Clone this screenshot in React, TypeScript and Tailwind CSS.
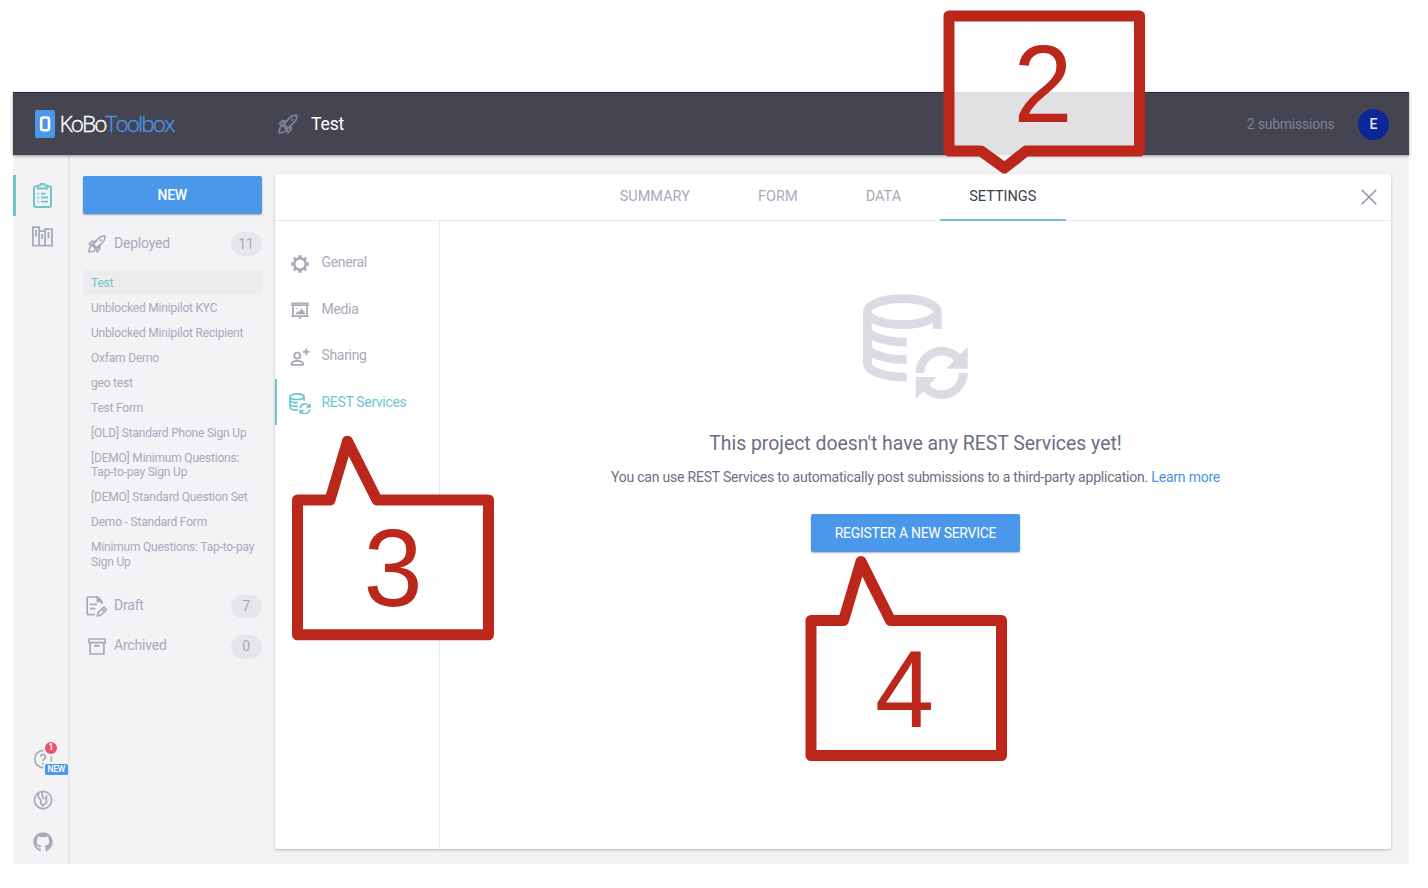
import React from "react";
import { FaGithub } from "react-icons/fa";

type IconProps = { className?: string };

function RocketIcon({ className }: IconProps) {
  return (
    <svg viewBox="0 0 24 24" fill="none" stroke="currentColor" strokeWidth="2.2" strokeLinejoin="round" strokeLinecap="round" className={className}>
      <path d="M22.600 1.400c-3.600-.2-6 .6-8.200 2.800L5.600 13.600l4.800 4.800 9.400-8.800c2.200-2.200 3-4.600 2.800-8.200z" />
      <path d="M10.500 8.400H5.200L1.500 12l13.300 5.500M15.600 13.500v5.300L12 22.500 6.500 9.200" />
      <path d="M5.600 13.600c-3 1-4.200 4-4.300 9.100 5.100-.1 8.100-1.300 9.100-4.300" />
      <path d="m16.500 7.500 1-1" />
    </svg>
  );
}

function ClipboardIcon() {
  return (
    <svg viewBox="0 0 19 25" fill="none" stroke="currentColor" strokeWidth="1.8" className="h-[25px] w-[19px]">
      <path d="M5 3.400H2.400A1.400 1.400 0 0 0 1 4.800v17.800A1.400 1.400 0 0 0 2.400 24h14.200a1.400 1.400 0 0 0 1.400-1.400V4.800a1.400 1.400 0 0 0-1.400-1.400H14" strokeWidth="2" />
      <path d="M5 5.500V2.400h2.400L8 1h3l.6 1.400H14v3.100z" />
      <path d="M4.500 10.700h1.700M8 10.700h4.500M4.500 14.500h1.700M8 14.500h7M4.500 18.600h1.700M8 18.600h7" strokeWidth="1.800" />
    </svg>
  );
}

function LibraryIcon() {
  return (
    <svg viewBox="0 0 21 21" fill="none" stroke="currentColor" strokeWidth="1.800" className="h-[21px] w-[21px]">
      <path d="M.9 1.200h6.200v18.500H.9zM7.100 5.200h6v14.500h-6zM13.100 3.200h6.900v16.500h-6.900z" />
      <path d="M4 4v6.500M10.100 8v5M16.500 6v6.500" strokeWidth="1.800" />
    </svg>
  );
}

function DraftIcon() {
  return (
    <svg viewBox="0 0 22 21" fill="none" stroke="currentColor" strokeWidth="1.700" strokeLinejoin="round" className="h-[21px] w-[22px]">
      <path d="M9 18.700H2.300A1.100 1.100 0 0 1 1.200 17.600V2.100A1.100 1.100 0 0 1 2.300 1h9.200l4.300 4.400V8" />
      <path d="M11.400 1v4.500h4.400z" fill="currentColor" />
      <path d="M4 8.400h7M4 12.700h5.500" />
      <path d="m11.300 20 .8-3.300 5.700-5.600 2.600 2.500-5.700 5.600zM16 13l2.500 2.500" />
    </svg>
  );
}

function ArchiveIcon() {
  return (
    <svg viewBox="0 0 18 17" fill="none" stroke="currentColor" strokeWidth="1.700" strokeLinejoin="round" className="h-[17px] w-[18px]">
      <path d="M.9 1h16.200v3.700H.9zM2.100 4.700h13.800V16H2.100z" />
      <path d="M6.300 7.800h5.300" strokeWidth="2.200" />
    </svg>
  );
}

function GearIcon() {
  return (
    <svg viewBox="0 0 18 18" fill="none" stroke="currentColor" className="h-[18px] w-[18px]">
      <circle cx="9" cy="9" r="5.700" strokeWidth="2.400" />
      <g strokeWidth="3.400">
        <path d="M9 .2v2.600M9 15.200v2.600M.2 9h2.600M15.200 9h2.600" />
        <path d="m2.900 2.900 1.600 1.600M13.500 13.500l1.600 1.600M2.900 15.100l1.600-1.600M13.500 4.500l1.600-1.600" strokeWidth="3" />
      </g>
    </svg>
  );
}

function MediaIcon() {
  return (
    <svg viewBox="0 0 18 17" fill="none" stroke="currentColor" className="h-[17px] w-[18px]">
      <path d="M.2 2.200h17.600" strokeWidth="3.600" />
      <path d="M1 2.200h16" stroke="#d0d2da" strokeWidth=".8" />
      <path d="M2 3v11M16 3v11M.2 14.200h17.600M9 14v3" strokeWidth="1.700" />
      <path d="M4 12.300 7 9l1.200 1.100L10.600 6l1.600 3.300 1-.5 1 3.500z" fill="currentColor" stroke="none" />
      <circle cx="5.700" cy="6.600" r=".8" fill="currentColor" stroke="none" />
    </svg>
  );
}

function SharingIcon() {
  return (
    <svg viewBox="0 0 20 18" fill="none" stroke="currentColor" strokeWidth="1.800" className="h-[18px] w-[20px]">
      <circle cx="7.300" cy="7.600" r="3" />
      <path d="M1.300 16.800c0-2.600 2.300-3.900 6-3.900s6 1.300 6 3.900z" strokeLinejoin="round" />
      <path d="M16.200.4v6.800M12.800 3.800h6.800" />
    </svg>
  );
}

function RestIcon() {
  return (
    <svg viewBox="0 0 22 21" fill="none" stroke="currentColor" strokeWidth="1.700" className="h-[21px] w-[22px]">
      <ellipse cx="8" cy="3.700" rx="7" ry="2.800" />
      <path d="M15 3.700v4.100M1 3.700v10.900c0 1.500 3.400 2.500 8 2.500M1 7.200c0 1.500 3.400 2.500 8 2.500M1 10.900c0 1.500 3.400 2.500 8 2.500" />
      <path d="M11.300 15.100a4.700 4.700 0 0 1 8.600-2.200M20.700 16.300a4.700 4.700 0 0 1-8.700 2.200" />
      <path d="M21 10.700v3.100h-3.400M11.200 20.700v-3.100h3.300" />
    </svg>
  );
}

function RestHero() {
  return (
    <svg viewBox="0 0 105 105" fill="none" stroke="currentColor" strokeWidth="8.700" className="h-[105px] w-[105px]">
      <ellipse cx="39.300" cy="17.700" rx="35" ry="13" />
      <path d="M74.300 17.700V35M4.400 17.700v51.500c0 8 17.500 14 39.300 14M4.400 34.200c0 8 17.500 14 39.300 14M4.400 51.700c0 8 17.500 14 39.300 14" />
      <path d="M56.900 79a21.900 21.900 0 0 1 38.500-14.200M100.500 79A21.900 21.900 0 0 1 62 93" />
      <path d="M104.700 52.700v22H83zM52.700 105V83h21z" fill="currentColor" stroke="none" />
    </svg>
  );
}

function HelpIcon() {
  return (
    <svg viewBox="0 0 20 20" fill="none" stroke="currentColor" strokeWidth="1.700" className="h-[20px] w-[20px]">
      <path d="M10.500 1.300A8.700 8.700 0 0 0 10.500 18.700" />
      <path d="M18.200 7.500a8.700 8.700 0 0 1-.2 5.200" />
      <path d="M7.500 7.700a2.500 2.500 0 1 1 3.700 2.300c-.8.400-1.100.9-1.100 2M10.100 13.800v1.700" />
    </svg>
  );
}

function GlobeIcon() {
  return (
    <svg viewBox="0 0 20 20" fill="none" stroke="currentColor" strokeWidth="1.700" strokeLinejoin="round" className="h-[20px] w-[20px]">
      <circle cx="10" cy="10" r="8.600" />
      <path d="M5.400 3v4.300l2.400 2.500v3.400l2 2.700 1.300-1.500 2.400-1.500V8.400h-3L9.300 6.500V2M13.500 8.400V5" />
    </svg>
  );
}

const projects = [
  "Test",
  "Unblocked Minipilot KYC",
  "Unblocked Minipilot Recipient",
  "Oxfam Demo",
  "geo test",
  "Test Form",
  "[OLD] Standard Phone Sign Up",
  "[DEMO] Minimum Questions: Tap-to-pay Sign Up",
  "[DEMO] Standard Question Set",
  "Demo - Standard Form",
  "Minimum Questions: Tap-to-pay Sign Up",
];

function Group({ icon, label, count }: { icon: React.ReactNode; label: string; count: number }) {
  return (
    <div className="flex h-6 items-center">
      <span className="flex w-[31px] items-center pl-[3px]">{icon}</span>
      <span className="-mt-[2px] flex-1 text-[14px] tracking-[-0.200px]">{label}</span>
      <span className="flex h-[23.500px] w-[31px] items-center justify-center rounded-full bg-[#e5e6e9] text-[14px] tracking-[-0.200px]">{count}</span>
    </div>
  );
}

function SettingsLink({ icon, label, active }: { icon: React.ReactNode; label: string; active?: boolean }) {
  return (
    <div className={active ? "flex h-[46.500px] items-center border-l-2 border-[#6fc5cd] text-[#6fc5cd]" : "flex h-[46.500px] items-center border-l-2 border-transparent"}>
      <span className="mt-[2px] flex w-[44.500px] justify-center">
        <span className="ml-[2px]">{icon}</span>
      </span>
      <span className="mt-[0.500px] text-[14px] tracking-[-0.330px]">{label}</span>
    </div>
  );
}

type CalloutProps = { className: string; digit: string; path: string; height: number; x: number; baseline: number };

function Callout({ className, digit, path, height, x, baseline }: CalloutProps) {
  return (
    <svg className={className} viewBox={`0 0 203 ${height}`}>
      <path d={path} fill="#fff" fillOpacity=".84" stroke="#bb271a" strokeWidth="11" strokeLinejoin="round" />
      <text transform={`translate(${x} ${baseline}) scale(.97 1)`} textAnchor="middle" fill="#bb271a" fontSize="109.500" fontFamily="Liberation Sans, Arial, sans-serif">
        {digit}
      </text>
    </svg>
  );
}

export default function App() {
  return (
    <div className="relative h-[888px] w-[1428px] overflow-hidden bg-white pl-[13px] pt-[92px] font-['Roboto',sans-serif] text-[#a7aab8]">
      <div className="flex h-[772px] w-[1395.500px] flex-col bg-[#f3f3f6]">
        <header className="z-10 flex h-[63px] shrink-0 items-center border-t border-[#2c2c34] bg-[#444551] shadow-[0_1px_3px_rgba(0,0,0,0.4)]">
          <div className="flex w-[264.500px] items-center pl-[22px]">
            <svg viewBox="0 0 20 28" className="h-7 w-5">
              <rect width="20" height="28" rx="2" fill="#4b97ea" />
              <rect x="6.200" y="7.500" width="7.800" height="12.800" rx="2" fill="#4b97ea" stroke="#fff" strokeWidth="2.600" />
            </svg>
            <span className="ml-[4.500px] font-['Open_Sans',sans-serif] text-[22.500px] font-light leading-7 tracking-[-1.880px] text-white [-webkit-text-stroke:0.4px_currentColor]">
              KoBo<span className="text-[#4793e4]">Toolbox</span>
            </span>
          </div>
          <RocketIcon className="h-5 w-5 text-[#7d7f8f]" />
          <h1 className="ml-[13.500px] mt-px flex-1 text-[17.500px] tracking-[-0.100px] text-white">Test</h1>
          <span className="mr-[23.500px] text-[14px] tracking-[-0.220px] text-[#7f8191]">2 submissions</span>
          <span className="mr-[19.500px] flex h-[31px] w-[31px] items-center justify-center rounded-full bg-[#0c2795] text-[14px] font-medium text-[#e3e6f6]">E</span>
        </header>

        <div className="flex min-h-0 flex-1">
          <nav className="flex w-[57px] shrink-0 flex-col border-r-2 border-[#e5e6e9] pt-[20px]">
            <div className="flex h-[41px] items-center border-l-[3px] border-[#6fc5cd] pl-[17px] text-[#6fc5cd]">
              <ClipboardIcon />
            </div>
            <div className="mt-[10px] pl-[19px]">
              <LibraryIcon />
            </div>
            <div className="mt-auto flex flex-col gap-[21.600px] pb-[12px] pl-[20px]">
              <div className="relative">
                <HelpIcon />
                <span className="absolute -top-[7px] left-[12px] flex h-3 w-3 items-center justify-center rounded-full bg-[#ea5468] text-[9px] font-medium text-white">1</span>
                <span className="absolute left-[12px] top-[15px] flex h-[11px] w-[22.500px] items-center justify-center rounded-[1.500px] bg-[#4b97ea] text-[8.500px] font-medium tracking-[-0.300px] text-white">NEW</span>
              </div>
              <GlobeIcon />
              <FaGithub className="h-[20px] w-[20px]" />
            </div>
          </nav>

          <aside className="w-[205px] shrink-0 pl-[13px] pr-[13.500px] pt-[21px]">
            <button className="flex h-[38px] w-full items-center justify-center rounded-[2px] bg-[#4b97ea] text-[14px] font-medium tracking-[-0.300px] text-white shadow-[0_1px_2px_rgba(0,0,0,0.3)]">NEW</button>
            <div className="mt-[18px]">
              <Group icon={<RocketIcon className="ml-[2px] h-[18px] w-[18px]" />} label="Deployed" count={11} />
            </div>
            <ul className="mt-[14.300px]">
              {projects.map((name, i) => (
                <li key={name} className={i === 0 ? "bg-[#ececed] px-2 py-[5.260px] text-[12px] leading-[14.500px] tracking-[-0.200px] text-[#6fc5cd]" : "px-2 py-[5.260px] pr-[5px] text-[12px] leading-[14.500px] tracking-[-0.200px]"}>
                  {name}
                </li>
              ))}
            </ul>
            <div className="mt-[20px] flex flex-col gap-[16.700px]">
              <Group icon={<DraftIcon />} label="Draft" count={7} />
              <Group icon={<span className="ml-[2px]"><ArchiveIcon /></span>} label="Archived" count={0} />
            </div>
          </aside>

          <main className="mb-[15px] mt-[19px] flex w-[1116px] flex-col rounded-[2px] bg-white shadow-[0_1px_3px_rgba(0,0,0,0.25)]">
            <div className="flex h-[47px] shrink-0 items-stretch border-b border-[#e8e9ed] text-[14.500px]">
              <div className="-mb-px ml-[315.500px] flex flex-1 gap-[9.700px]">
                <div className="px-[29.200px] pt-[12px]">SUMMARY</div>
                <div className="px-[29.200px] pt-[12px]">FORM</div>
                <div className="px-[29.200px] pt-[12px]">DATA</div>
                <div className="border-b-2 border-[#6fc5cd] px-[29.200px] pt-[12px] text-[#3c3d4e]">SETTINGS</div>
              </div>
              <svg viewBox="0 0 16 16" className="mr-[14.500px] mt-[15px] h-4 w-4 text-[#8f92a2]" fill="none" stroke="currentColor" strokeWidth="1.500">
                <path d="M.7.7l14.600 14.600M15.300.7.7 15.300" />
              </svg>
            </div>
            <div className="flex min-h-0 flex-1">
              <div className="w-[165px] shrink-0 border-r border-[#e8e9ed] pt-[18.400px]">
                <SettingsLink icon={<GearIcon />} label="General" />
                <SettingsLink icon={<MediaIcon />} label="Media" />
                <SettingsLink icon={<SharingIcon />} label="Sharing" />
                <SettingsLink icon={<RestIcon />} label="REST Services" active />
              </div>
              <section className="flex flex-1 flex-col items-center pt-[73px] text-[#6b6e83]">
                <span className="text-[#dbdce3]">
                  <RestHero />
                </span>
                <h2 className="mt-[33px] text-[19.400px] leading-6">This project doesn't have any REST Services yet!</h2>
                <p className="mt-[11px] text-[14px] leading-5 tracking-[-0.210px]">
                  You can use REST Services to automatically post submissions to a third-party application. <a className="text-[#4793e4]">Learn more</a>
                </p>
                <button className="mt-[27px] flex h-[38px] w-[209px] items-center justify-center rounded-[2px] bg-[#4b97ea] text-[14px] tracking-[-0.280px] text-white shadow-[0_1px_2px_rgba(0,0,0,0.3)]">REGISTER A NEW SERVICE</button>
              </section>
            </div>
          </main>
        </div>
      </div>

      <Callout className="absolute left-[943px] top-[10px] z-20 h-[164px] w-[203px]" height={164} digit="2" x={100} baseline={112} path="M6 6H196.500V141H83L61.500 158 38 141H6Z" />
      <Callout className="absolute left-[292px] top-[435px] z-20 h-[206px] w-[203px]" height={206} digit="3" x={101} baseline={171} path="M5.500 65H38L55.500 6.200 85 65H196.500V199.800H5.500Z" />
      <Callout className="absolute left-[805px] top-[555px] z-20 h-[207px] w-[203px]" height={207} digit="4" x={99.500} baseline={172} path="M6 65.500H38.500L56 6.500 85.500 65.500H196.500V200.500H6Z" />
    </div>
  );
}
